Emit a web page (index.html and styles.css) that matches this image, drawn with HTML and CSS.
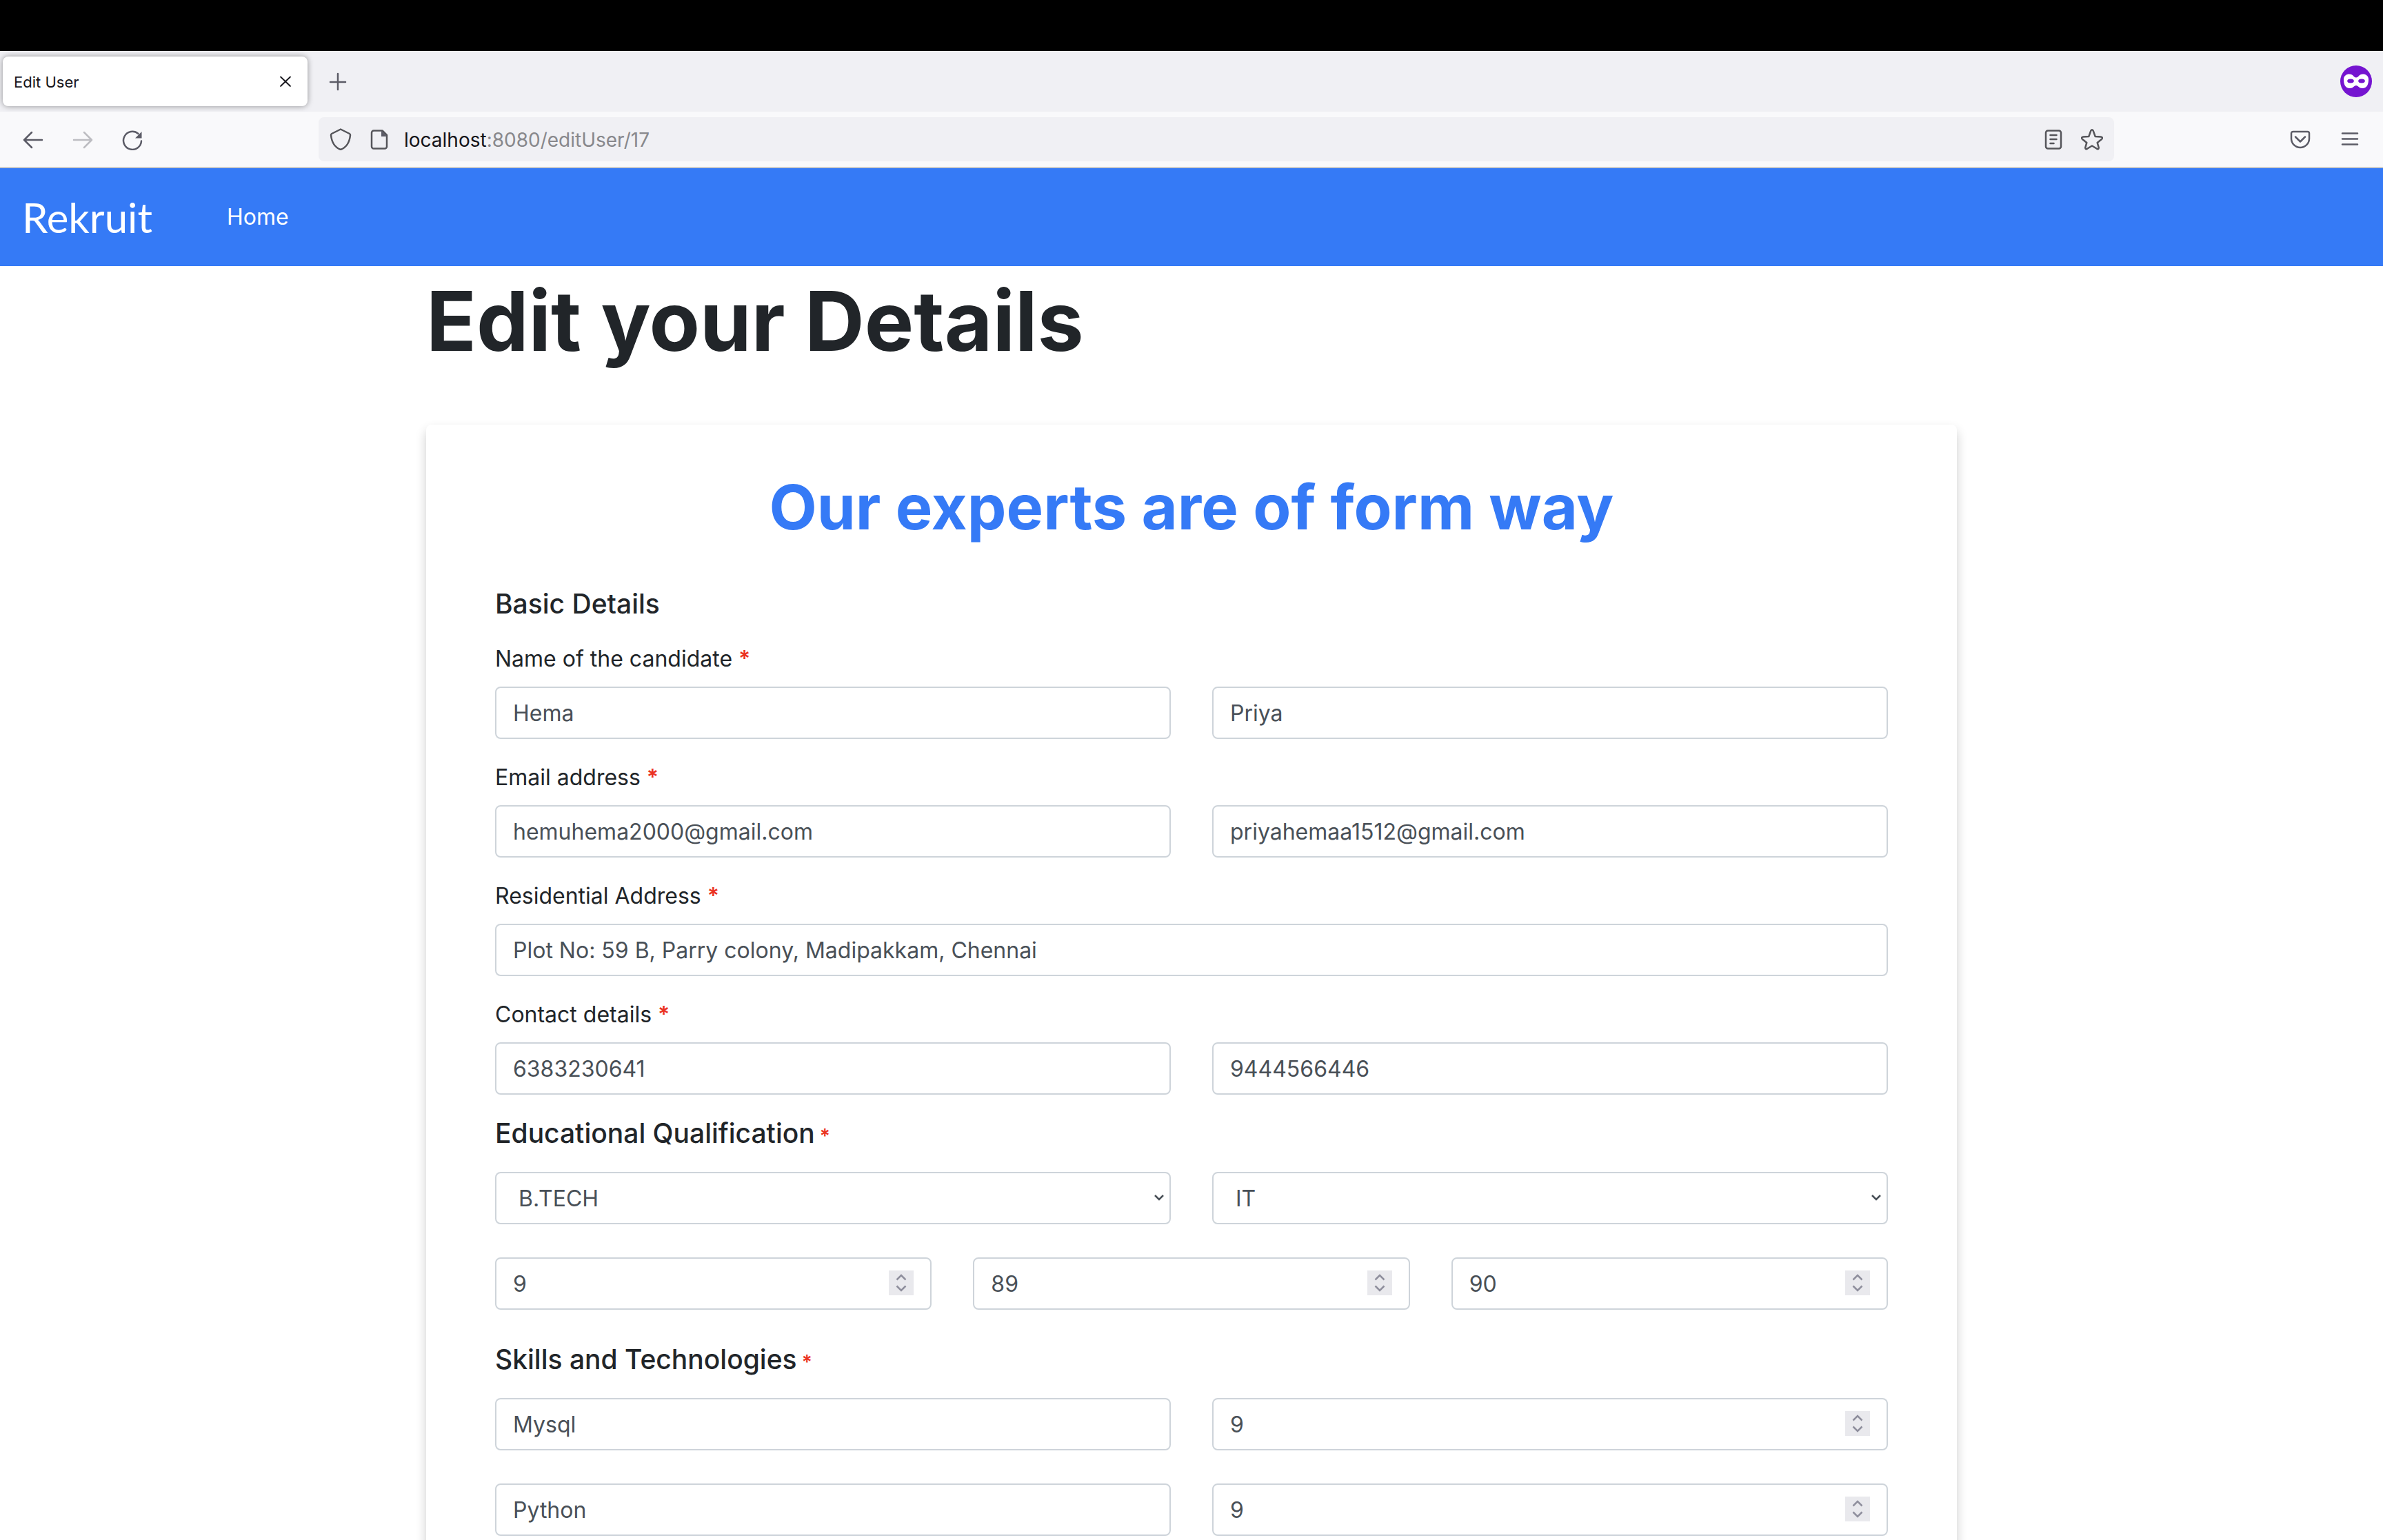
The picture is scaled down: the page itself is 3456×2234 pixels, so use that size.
FILE: index.html
```html
<!DOCTYPE html>
<html lang="en">
<head>
<meta charset="utf-8">
<title>Edit User</title>
<link rel="stylesheet" href="styles.css">
</head>
<body>
<div class="menubar"></div>

<div class="tabstrip">
  <div class="tab">
    <span class="tab-title">Edit User</span>
    <button class="tab-close" type="button" aria-label="Close tab">
      <svg viewBox="0 0 32 32" width="32" height="32"><path d="M9 9.500L23 23M23 9.500L9 23" stroke="#15141a" stroke-width="1.800" stroke-linecap="round"/></svg>
    </button>
  </div>
  <button class="tool" type="button" aria-label="New tab">
    <svg viewBox="0 0 32 32" width="32" height="32"><path d="M16 5v23M5 17h22" stroke="#5b5b66" stroke-width="2.500" stroke-linecap="round"/></svg>
  </button>
  <svg class="private-badge" viewBox="0 0 46 46" width="46" height="46">
    <circle cx="23" cy="23" r="23" fill="#7514d0"/>
    <path d="M5 20c0-5 4-7.500 8-7.500 6 0 6.500 5 10 5s4-5 10-5c4 0 8 2.500 8 7.500 0 7-2 13-9 13-5 0-6-4-9-4s-4 4-9 4c-7 0-9-6-9-13z" fill="#fff"/>
    <ellipse cx="15" cy="22.500" rx="4.800" ry="3" fill="#7514d0"/>
    <ellipse cx="31" cy="22.500" rx="4.800" ry="3" fill="#7514d0"/>
  </svg>
</div>

<div class="toolbar">
  <div class="tools">
    <button class="tool" type="button" aria-label="Back">
      <svg viewBox="0 0 32 32" width="32" height="32" class="ink"><path d="M29 17H3M14 6L3 17l11 11"/></svg>
    </button>
    <button class="tool" type="button" aria-label="Forward" disabled>
      <svg viewBox="0 0 32 32" width="32" height="32" class="ink faded"><path d="M3 17h26M18 6l11 11-11 11"/></svg>
    </button>
    <button class="tool" type="button" aria-label="Reload">
      <svg viewBox="0 0 32 32" width="32" height="32" class="ink"><path d="M29 18.500A13 13 0 1 1 24.500 8"/><path d="M29.500 5v9.500H20z" class="solid"/></svg>
    </button>
  </div>
  <div class="urlbar">
    <span class="url-icon">
      <svg viewBox="0 0 32 32" width="32" height="32" class="ink dark"><path d="M16 1.500l13 6.500c1 0.500 1 1 1 2C29 20 24 28 16 31 8 28 3 20 2 10c0-1 0-1.500 1-2z"/></svg>
    </span>
    <span class="url-icon">
      <svg viewBox="0 0 32 32" width="32" height="32" class="ink dark"><path d="M8 3.500h12.500L27 10v16.500a3 3 0 0 1-3 3H8a3 3 0 0 1-3-3v-20a3 3 0 0 1 3-3z"/><path d="M19 3.500V12h8.500z" class="solid"/></svg>
    </span>
    <div class="url" role="textbox" aria-label="Address" contenteditable="true" spellcheck="false">localhost<span class="url-path">:8080/editUser/17</span></div>
    <button class="url-icon" type="button" aria-label="Reader view">
      <svg viewBox="0 0 32 32" width="32" height="32" class="ink dark"><rect x="5" y="3.500" width="22" height="26" rx="3"/><path d="M11.500 10h9M11.500 16h9M11.500 22h5"/></svg>
    </button>
    <button class="url-icon" type="button" aria-label="Bookmark">
      <svg viewBox="0 0 32 32" width="32" height="32" class="ink dark"><path d="M14.300 3.600q1.700-2.800 3.400 0l3 8.400 8.600.6q2.900 1 .9 3.100l-6.500 5.200 2.100 7.500q-.3 2.600-2.800 1.400L16 25.500l-7 4.300q-2.500 1.200-2.800-1.400l2.100-7.500-6.500-5.200q-2-2.100.9-3.100l8.600-.6z"/></svg>
    </button>
  </div>
  <div class="tools">
    <button class="tool" type="button" aria-label="Save to Pocket">
      <svg viewBox="0 0 32 32" width="32" height="32" class="ink"><path d="M5.500 5h21A2.500 2.500 0 0 1 29 7.500V15a13 13 0 0 1-26 0V7.500A2.500 2.500 0 0 1 5.500 5z"/><path d="M9 12.500l7 7 7-7"/></svg>
    </button>
    <button class="tool" type="button" aria-label="Menu">
      <svg viewBox="0 0 32 32" width="32" height="32" class="ink"><path d="M5 7.500h22M5 15.500h22M5 23.500h22"/></svg>
    </button>
  </div>
</div>

<div class="page">
  <nav class="navbar">
    <a class="brand" href="#">Rekruit</a>
    <a class="nav-link" href="#">Home</a>
  </nav>

  <main class="container">
    <h1 class="title">Edit your Details</h1>

    <form class="card">
      <h2 class="card-title">Our experts are of form way</h2>

      <h3 class="section">Basic Details</h3>

      <div class="group">
        <label class="label" for="first">Name of the candidate <span class="required">*</span></label>
        <div class="row two">
          <input class="control" id="first" type="text" value="Hema">
          <input class="control" type="text" aria-label="Last name" value="Priya">
        </div>
      </div>

      <div class="group">
        <label class="label" for="email">Email address <span class="required">*</span></label>
        <div class="row two">
          <input class="control" id="email" type="email" value="hemuhema2000@gmail.com">
          <input class="control" type="email" aria-label="Alternate email" value="priyahemaa1512@gmail.com">
        </div>
      </div>

      <div class="group">
        <label class="label" for="address">Residential Address <span class="required">*</span></label>
        <div class="row">
          <input class="control" id="address" type="text" value="Plot No: 59 B, Parry colony, Madipakkam, Chennai">
        </div>
      </div>

      <div class="group">
        <label class="label" for="phone">Contact details <span class="required">*</span></label>
        <div class="row two">
          <input class="control" id="phone" type="text" value="6383230641">
          <input class="control" type="text" aria-label="Alternate phone" value="9444566446">
        </div>
      </div>

      <h3 class="section">Educational Qualification<span class="required small"> *</span></h3>
      <div class="stack">
        <div class="row two">
          <select class="control" aria-label="Degree"><option>B.TECH</option></select>
          <select class="control" aria-label="Department"><option>IT</option></select>
        </div>
        <div class="row three">
          <input class="control" type="number" aria-label="CGPA" value="9">
          <input class="control" type="number" aria-label="Class XII percentage" value="89">
          <input class="control" type="number" aria-label="Class X percentage" value="90">
        </div>
      </div>

      <h3 class="section">Skills and Technologies<span class="required small"> *</span></h3>
      <div class="stack">
        <div class="row two">
          <input class="control" type="text" aria-label="Skill" value="Mysql">
          <input class="control" type="number" aria-label="Rating" value="9">
        </div>
        <div class="row two">
          <input class="control" type="text" aria-label="Skill" value="Python">
          <input class="control" type="number" aria-label="Rating" value="9">
        </div>
      </div>
    </form>
  </main>
</div>
</body>
</html>
```

FILE: styles.css
```css
* {
  box-sizing: border-box;
}

body {
  margin: 0;
  height: 100vh;
  display: flex;
  flex-direction: column;
  overflow: hidden;
  background: #fff;
  color: #212529;
  font-family: Inter, "Liberation Sans", sans-serif;
  font-size: 32px;
  line-height: 48px;
}

button {
  border: 0;
  padding: 0;
  background: none;
}

svg {
  display: block;
  fill: none;
}

/* Browser window */
.menubar {
  flex: none;
  height: 74px;
  background: #000;
}

.tabstrip {
  flex: none;
  display: flex;
  align-items: center;
  gap: 12px;
  height: 88px;
  padding: 0 16px 0 4px;
  background: #f0f0f4;
}

.tab {
  display: flex;
  align-items: center;
  justify-content: space-between;
  width: 442px;
  height: 72px;
  padding: 0 16px;
  border-radius: 8px;
  background: #fff;
  box-shadow: 0 0 8px rgba(0, 0, 0, 0.4);
}

.tab-title {
  padding-top: 2px;
  color: #15141a;
  font-size: 22px;
  line-height: 32px;
}

.private-badge {
  margin-left: auto;
}

.toolbar {
  flex: none;
  display: flex;
  align-items: center;
  height: 82px;
  padding: 0 16px;
  background: #f9f9fb;
  border-bottom: 2px solid #cccccc;
}

.tools {
  display: flex;
  gap: 8px;
}

.tool {
  display: grid;
  place-items: center;
  width: 64px;
  height: 64px;
}

.ink {
  stroke: #5b5b66;
  stroke-width: 2.5;
  stroke-linecap: round;
  stroke-linejoin: round;
}

.ink.dark {
  stroke: #55555a;
}

.ink.faded {
  stroke: #bdbdc2;
}

.solid {
  fill: #5b5b66;
  stroke: none;
}

.urlbar {
  flex: 1;
  display: flex;
  align-items: center;
  height: 64px;
  margin: 0 238px;
  padding: 0 4px;
  border-radius: 8px;
  background: #f0f0f4;
}

.url-icon {
  display: grid;
  place-items: center;
  width: 56px;
  height: 56px;
}

.url {
  flex: 1;
  padding: 2px 0 0 8px;
  color: #15141a;
  font-size: 28px;
}

.url-path {
  color: #88888c;
}

/* Page */
.page {
  flex: 1;
  min-height: 0;
  overflow-y: auto;
  scrollbar-width: none;
}

.navbar {
  display: flex;
  align-items: center;
  gap: 108px;
  height: 142px;
  padding: 0 32px;
  background: #357af6;
}

.brand,
.nav-link {
  color: #fff;
  text-decoration: none;
}

.brand {
  font-family: Lato, sans-serif;
  font-size: 60px;
  line-height: 72px;
}

.container {
  max-width: 2220px;
  margin: 0 auto;
}

.title {
  margin: 0 0 70px;
  font-size: 120px;
  font-weight: 700;
  line-height: 160px;
}

.card {
  padding: 60px 100px 100px;
  border-radius: 8px;
  background: #fff;
  box-shadow: 0 8px 16px rgba(0, 0, 0, 0.2);
}

.card-title {
  margin: 0 0 56px;
  color: #357af6;
  font-size: 90px;
  font-weight: 700;
  line-height: 120px;
  text-align: center;
}

.section {
  margin: 0 0 32px;
  font-size: 39px;
  font-weight: 500;
  line-height: 48px;
}

.group {
  margin-bottom: 32px;
}

.label {
  display: block;
  margin-bottom: 16px;
}

.required {
  color: #eb3323;
  font-weight: 600;
}

.required.small {
  font-size: 28px;
  line-height: 28px;
}

.row {
  display: grid;
  gap: 60px;
}

.two {
  grid-template-columns: 1fr 1fr;
}

.three {
  grid-template-columns: 1fr 1fr 1fr;
}

.stack {
  display: grid;
  gap: 48px;
  margin-bottom: 48px;
}

.control {
  width: 100%;
  height: 76px;
  padding: 0 24px;
  border: 2px solid #ced4da;
  border-radius: 8px;
  background: #fff;
  color: #495057;
  font-family: inherit;
  font-size: 32px;
}

select.control {
  appearance: none;
  padding: 0 32px;
  background: #fff url("data:image/svg+xml,%3Csvg xmlns='http://www.w3.org/2000/svg' width='16' height='12'%3E%3Cpath d='M2 2l6 6 6-6' fill='none' stroke='%23495057' stroke-width='2.500'/%3E%3C/svg%3E") no-repeat right 7px center;
}

input[type="number"]::-webkit-inner-spin-button {
  appearance: none;
  width: 36px;
  height: 36px;
  opacity: 1;
  background: #e9e9ed url("data:image/svg+xml,%3Csvg xmlns='http://www.w3.org/2000/svg' width='36' height='36'%3E%3Cpath d='M11.500 13.500l6.500-6.500 6.500 6.500M11.500 22.500l6.500 6.500 6.500-6.500' fill='none' stroke='%238f8f9d' stroke-width='2.500'/%3E%3C/svg%3E") no-repeat center;
}
```
